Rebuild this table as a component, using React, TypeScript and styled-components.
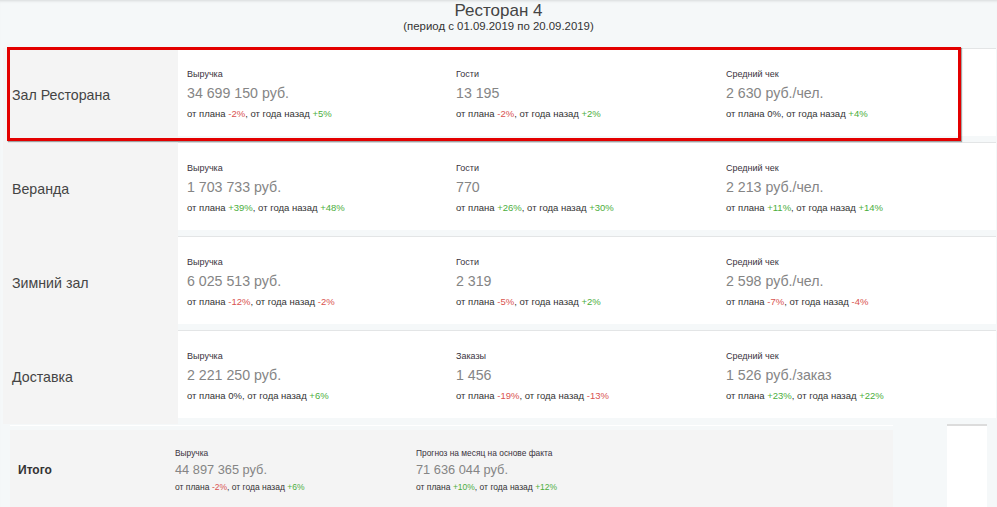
import styled, { createGlobalStyle } from 'styled-components';

const GlobalStyle = createGlobalStyle`
  body {
    margin: 0;
    background: #f5f8f9;
    font-family: 'Liberation Sans', Arial, sans-serif;
  }
`;

type Delta = { value: string; tone: 'up' | 'down' | 'flat' };

type Metric = {
  title: string;
  value: string;
  plan: Delta;
  year: Delta;
};

type Hall = { name: string; metrics: Metric[] };

const d = (value: string): Delta => ({
  value,
  tone: value.startsWith('+') ? 'up' : value.startsWith('-') ? 'down' : 'flat',
});

const halls: Hall[] = [
  {
    name: 'Зал Ресторана',
    metrics: [
      { title: 'Выручка', value: '34 699 150 руб.', plan: d('-2%'), year: d('+5%') },
      { title: 'Гости', value: '13 195', plan: d('-2%'), year: d('+2%') },
      { title: 'Средний чек', value: '2 630 руб./чел.', plan: d('0%'), year: d('+4%') },
    ],
  },
  {
    name: 'Веранда',
    metrics: [
      { title: 'Выручка', value: '1 703 733 руб.', plan: d('+39%'), year: d('+48%') },
      { title: 'Гости', value: '770', plan: d('+26%'), year: d('+30%') },
      { title: 'Средний чек', value: '2 213 руб./чел.', plan: d('+11%'), year: d('+14%') },
    ],
  },
  {
    name: 'Зимний зал',
    metrics: [
      { title: 'Выручка', value: '6 025 513 руб.', plan: d('-12%'), year: d('-2%') },
      { title: 'Гости', value: '2 319', plan: d('-5%'), year: d('+2%') },
      { title: 'Средний чек', value: '2 598 руб./чел.', plan: d('-7%'), year: d('-4%') },
    ],
  },
  {
    name: 'Доставка',
    metrics: [
      { title: 'Выручка', value: '2 221 250 руб.', plan: d('0%'), year: d('+6%') },
      { title: 'Заказы', value: '1 456', plan: d('-19%'), year: d('-13%') },
      { title: 'Средний чек', value: '1 526 руб./заказ', plan: d('+23%'), year: d('+22%') },
    ],
  },
];

const totals: Metric[] = [
  { title: 'Выручка', value: '44 897 365 руб.', plan: d('-2%'), year: d('+6%') },
  {
    title: 'Прогноз на месяц на основе факта',
    value: '71 636 044 руб.',
    plan: d('+10%'),
    year: d('+12%'),
  },
];

const Page = styled.div`
  width: 997px;
  height: 507px;
  overflow: hidden;
  box-shadow: inset 0 3px 3px -2px rgba(0, 0, 0, 0.12);
`;

const Header = styled.header`
  text-align: center;
  padding-top: 2px;
  height: 48px;
  box-sizing: border-box;
`;

const Title = styled.h1`
  margin: 0;
  font-size: 17px;
  line-height: 18px;
  font-weight: normal;
  color: #444;
`;

const Period = styled.div`
  font-size: 11.4px;
  line-height: 13px;
  color: #333;
`;

const Halls = styled.div`
  position: relative;
  margin-left: 3px;
  width: 984px;
  display: flex;
  flex-direction: column;
`;

const Highlight = styled.div`
  position: absolute;
  left: 4px;
  top: -1px;
  width: 954px;
  height: 94px;
  box-sizing: border-box;
  border: 3.5px solid #e30000;
  box-shadow: 1px 1px 1px rgba(0, 0, 0, 0.35);
  pointer-events: none;
`;

const Row = styled.div`
  display: flex;
  height: 94px;
`;

const HallName = styled.div`
  width: 175px;
  flex: none;
  display: flex;
  align-items: center;
  padding: 0 0 0 9px;
  box-sizing: border-box;
  background: #f4f4f4;
  font-size: 14.2px;
  color: #444;
`;

const HallBody = styled.div`
  flex: 1;
  display: grid;
  grid-template-columns: 269px 270px 270px;
  align-content: start;
  padding: 19px 0 0 9px;
  box-sizing: border-box;
  background: #fff;
  border-top: 1px solid #e3e5e6;
  border-bottom: 6px solid #f5f8f9;
`;

const MetricBox = styled.div`
  display: flex;
  flex-direction: column;
`;

const MetricTitle = styled.div<{ $small?: boolean }>`
  font-size: ${p => (p.$small ? '8.4px' : '9px')};
  line-height: 12px;
  color: #3a3340;
`;

const MetricValue = styled.div<{ $small?: boolean }>`
  margin: 3px 0 ${p => (p.$small ? '3px' : '5px')};
  font-size: ${p => (p.$small ? '12.8px' : '14.2px')};
  line-height: ${p => (p.$small ? '16px' : '20px')};
  color: #858585;
`;

const MetricNote = styled.div<{ $small?: boolean }>`
  font-size: ${p => (p.$small ? '8.5px' : '9.5px')};
  line-height: 12px;
  color: #333;
`;

const Change = styled.span<{ $tone: Delta['tone'] }>`
  color: ${p =>
    p.$tone === 'up' ? '#4cae3c' : p.$tone === 'down' ? '#d9534f' : 'inherit'};
`;

const Footer = styled.div`
  display: flex;
  height: 84px;
`;

const TotalBlock = styled.div`
  margin-left: 10px;
  width: 883px;
  margin-top: 1px;
  border-top: 1px solid #ffffff;
  padding-top: 4px;
  background: #f5f8f9;
  display: flex;
  flex-direction: column;
`;

const TotalInner = styled.div`
  flex: 1;
  display: flex;
  align-items: flex-start;
  background: #f4f4f4;
`;

const TotalName = styled.div`
  width: 165px;
  flex: none;
  padding: 33px 0 0 8px;
  box-sizing: border-box;
  font-size: 12px;
  font-weight: bold;
  color: #333;
`;

const TotalGrid = styled.div`
  display: grid;
  grid-template-columns: 241px 241px;
  padding-top: 17px;
`;

const SidePanel = styled.div`
  margin-left: 54px;
  width: 40px;
  background: #fff;
  border-top: 2px solid #dcdcdc;
`;

function MetricView({ metric, small }: { metric: Metric; small?: boolean }) {
  return (
    <MetricBox>
      <MetricTitle $small={small}>{metric.title}</MetricTitle>
      <MetricValue $small={small}>{metric.value}</MetricValue>
      <MetricNote $small={small}>
        от плана <Change $tone={metric.plan.tone}>{metric.plan.value}</Change>, от
        года назад <Change $tone={metric.year.tone}>{metric.year.value}</Change>
      </MetricNote>
    </MetricBox>
  );
}

export default function App() {
  return (
    <Page>
      <GlobalStyle />
      <Header>
        <Title>Ресторан 4</Title>
        <Period>(период с 01.09.2019 по 20.09.2019)</Period>
      </Header>
      <Halls>
        {halls.map(hall => (
          <Row key={hall.name}>
            <HallName>{hall.name}</HallName>
            <HallBody>
              {hall.metrics.map(metric => (
                <MetricView key={metric.title} metric={metric} />
              ))}
            </HallBody>
          </Row>
        ))}
        <Highlight />
      </Halls>
      <Footer>
        <TotalBlock>
          <TotalInner>
            <TotalName>Итого</TotalName>
            <TotalGrid>
              {totals.map(metric => (
                <MetricView key={metric.title} metric={metric} small />
              ))}
            </TotalGrid>
          </TotalInner>
        </TotalBlock>
        <SidePanel />
      </Footer>
    </Page>
  );
}
